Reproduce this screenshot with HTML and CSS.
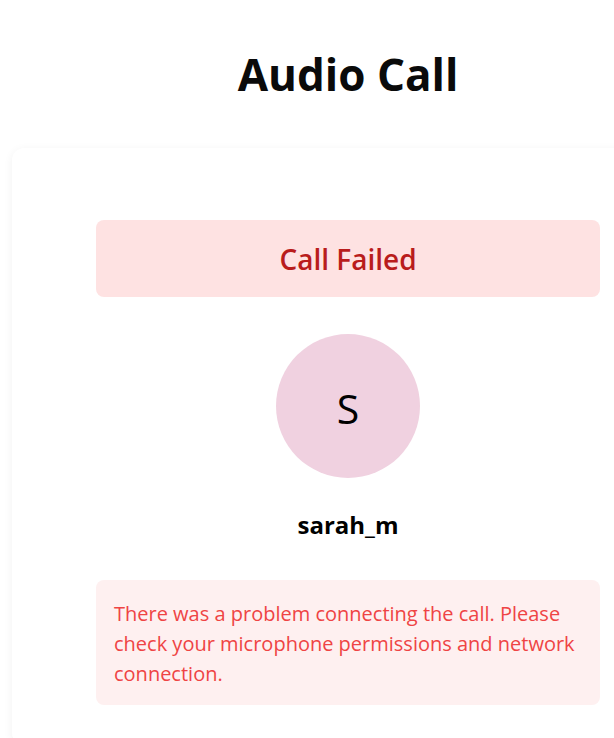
FILE: index.html
```html
<!DOCTYPE html>
<html lang="en">
<head>
<meta charset="utf-8">
<title>Audio Call</title>
<link rel="stylesheet" href="styles.css">
</head>
<body>
<div class="viewport">
  <div class="page">
    <h1 class="title">Audio Call</h1>
    <div class="card">
      <div class="status">Call Failed</div>
      <div class="avatar">S</div>
      <div class="name">sarah_m</div>
      <div class="message">There was a problem connecting the call. Please check your microphone permissions and network connection.</div>
    </div>
  </div>
</div>
</body>
</html>
```
FILE: styles.css
```css
html, body {
  margin: 0;
  padding: 0;
  background: #ffffff;
  overflow: hidden;
}
body {
  font-family: "Open Sans", "Noto Sans", sans-serif;
  color: #000;
}
.viewport {
  width: 100%;
  height: 738px;
  overflow: hidden;
}
.page {
  width: 696px;
}
.title {
  margin: 0;
  padding-top: 44px;
  height: 148px;
  box-sizing: border-box;
  text-align: center;
  font-size: 44px;
  font-weight: 700;
  line-height: 60px;
  color: #0a0a0a;
}
.card {
  margin: 0 12px;
  background: #fff;
  border-radius: 12px;
  box-shadow: 0 2px 10px rgba(0, 0, 0, 0.06);
  padding: 72px 84px 40px;
  display: flex;
  flex-direction: column;
  align-items: center;
}
.status {
  align-self: stretch;
  height: 77px;
  background: #fee2e2;
  border-radius: 8px;
  color: #b91c1c;
  font-size: 28px;
  font-weight: 600;
  display: flex;
  align-items: center;
  justify-content: center;
}
.avatar {
  margin-top: 37px;
  width: 144px;
  height: 144px;
  border-radius: 50%;
  background: #f0d1e0;
  display: flex;
  align-items: center;
  justify-content: center;
  font-size: 41px;
  padding-top: 3px;
  box-sizing: border-box;
  color: #000;
}
.name {
  margin-top: 31px;
  font-size: 24px;
  font-weight: 700;
  line-height: 32px;
}
.message {
  align-self: stretch;
  margin-top: 39px;
  background: #fef0f0;
  border-radius: 8px;
  padding: 19px 18px 16px;
  color: #ef4444;
  font-size: 20px;
  line-height: 30px;
}
```
